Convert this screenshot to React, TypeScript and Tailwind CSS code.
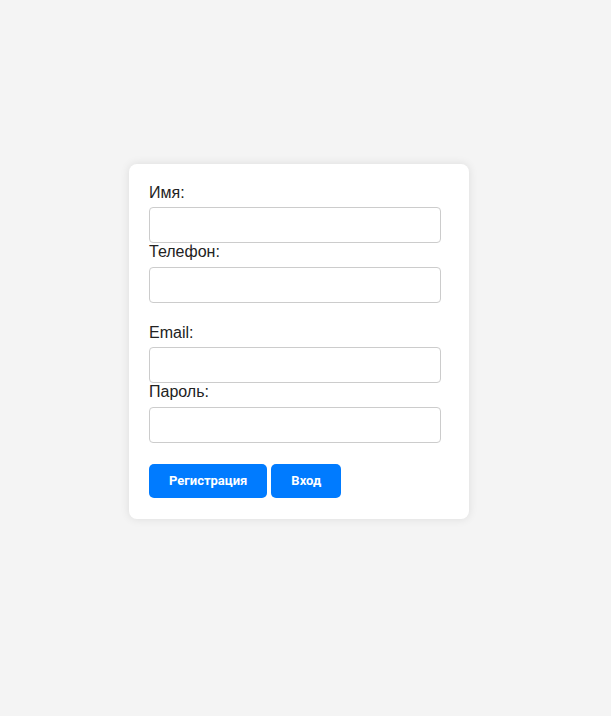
const fields = [
  [
    { label: "Имя:", type: "text" },
    { label: "Телефон:", type: "tel" },
  ],
  [
    { label: "Email:", type: "email" },
    { label: "Пароль:", type: "password" },
  ],
];

const App = () => {
  return (
    <main className="min-h-[716px] bg-[#f4f4f4] pl-[129px] pt-[164px] font-['Liberation_Sans',Arial,sans-serif]">
      <form className="flex w-[340px] flex-col gap-[21px] rounded-lg bg-white p-5 pb-[21px] shadow-[0_0_10px_rgba(0,0,0,0.1)]">
        {fields.map((group, groupIndex) => (
          <div key={groupIndex} className="flex flex-col">
            {group.map((field) => (
              <label key={field.label} className="flex flex-col">
                <span className="text-base leading-[18.4px] text-[#222]">{field.label}</span>
                <input
                  type={field.type}
                  className="mt-[5px] h-9 w-[292px] rounded border border-[#ccc] px-2 outline-none"
                />
              </label>
            ))}
          </div>
        ))}

        <div className="flex gap-1 font-['Roboto',sans-serif]">
          <button
            type="button"
            className="h-[34px] rounded-[5px] bg-[#007bff] px-5 text-[13px] font-bold text-white"
          >
            Регистрация
          </button>
          <button
            type="button"
            className="h-[34px] rounded-[5px] bg-[#007bff] px-5 text-[13px] font-bold text-white"
          >
            Вход
          </button>
        </div>
      </form>
    </main>
  );
};

export default App;
